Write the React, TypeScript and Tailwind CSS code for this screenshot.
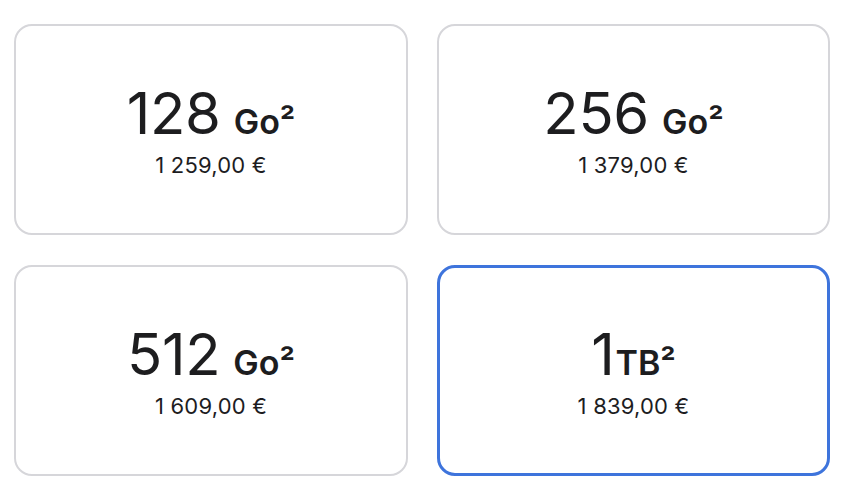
const options = [
  { size: '128', unit: 'Go²', space: true, price: '1 259,00 €' },
  { size: '256', unit: 'Go²', space: true, price: '1 379,00 €' },
  { size: '512', unit: 'Go²', space: true, price: '1 609,00 €' },
  { size: '1', unit: 'TB²', space: false, price: '1 839,00 €' },
]

export default function App() {
  const selected = 3

  return (
    <div className="min-h-[500px] w-[856px] bg-white pl-[14px] pt-[24px] text-[#1d1d1f] [font-family:Inter,'Noto_Sans',sans-serif]">
      <div className="grid grid-cols-[394px_393px] gap-x-[29px] gap-y-[30px]">
        {options.map((o, i) => (
          <button
            key={o.size}
            type="button"
            className={`flex h-[211px] flex-col items-center justify-center rounded-[18px] bg-white ${
              i === selected ? 'border-[3px] border-[#3e74dc]' : 'border-2 border-[#d6d6da]'
            }`}
          >
            <span className="flex items-baseline leading-none">
              <span className="text-[58px] font-normal tracking-[-0.3px]">{o.size}</span>
              <span className={`text-[34px] font-semibold ${o.space ? 'ml-[13px]' : 'ml-[1px]'}`}>{o.unit}</span>
            </span>
            <span className="mt-[12px] text-[22px] leading-none tracking-[0.2px]">{o.price}</span>
          </button>
        ))}
      </div>
    </div>
  )
}
